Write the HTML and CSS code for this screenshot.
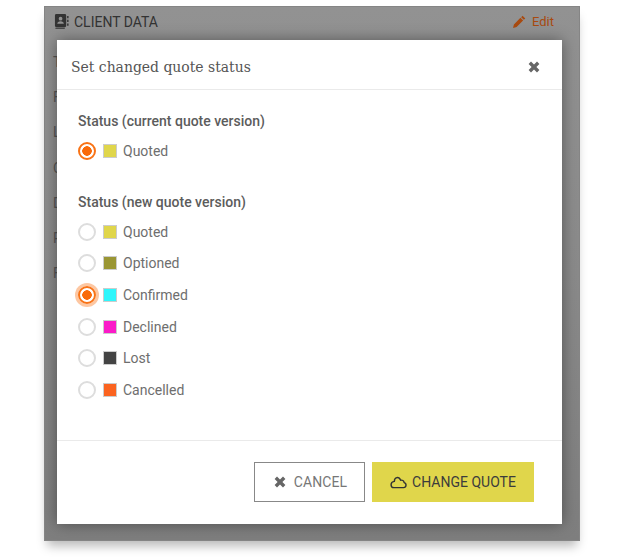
FILE: index.html
```html
<!DOCTYPE html>
<html lang="en">
<head>
<meta charset="utf-8">
<title>Set changed quote status</title>
<link rel="stylesheet" href="styles.css">
</head>
<body>
<div class="window">
  <div class="panel-head">
    <svg class="book" viewBox="0 0 16 16"><path fill="#333" d="M1 1.5A1.5 1.5 0 0 1 2.500 0h9A1.500 1.500 0 0 1 13 1.500v11a1.500 1.500 0 0 1-1.500 1.500h-9A1.500 1.500 0 0 1 1 12.500zM7 3a2 2 0 1 0 0 4 2 2 0 0 0 0-4zM3.500 10.500h7c0-1.600-1.500-2.700-3.500-2.700s-3.500 1.100-3.500 2.700z"/><path fill="#333" d="M14 2h1.500v2.500H14zM14 6h1.500v2.500H14zM14 10h1.500v2.500H14zM1.500 14.600h10v1h-10z"/></svg>
    <span class="panel-title">CLIENT DATA</span>
    <svg class="pencil" viewBox="0 0 14 14"><path fill="#a84a10" d="M10.300.8l2.900 2.900-1.500 1.500-2.900-2.900zM8 3l2.900 2.900-7 7L0 14l1-3.900z"/></svg>
    <span class="edit">Edit</span>
  </div>
  <div class="panel-rows">
    <span>T</span><span>F</span><span>L</span><span>C</span><span>D</span><span>P</span><span>F</span>
  </div>
  <div class="modal">
    <div class="modal-head">
      <h1>Set changed quote status</h1>
      <svg class="x close" viewBox="0 0 12 12"><path fill="#666" d="M3 .6L6 3.600 9 .6 11.400 3 8.400 6l3 3L9 11.400l-3-3-3 3L.6 9l3-3-3-3z"/></svg>
    </div>
    <div class="modal-body">
      <p class="group-label">Status (current quote version)</p>
      <div class="option"><span class="radio on"></span><span class="swatch quoted"></span>Quoted</div>
      <p class="group-label second">Status (new quote version)</p>
      <div class="option"><span class="radio"></span><span class="swatch quoted"></span>Quoted</div>
      <div class="option"><span class="radio"></span><span class="swatch optioned"></span>Optioned</div>
      <div class="option"><span class="radio on focus"></span><span class="swatch confirmed"></span>Confirmed</div>
      <div class="option"><span class="radio"></span><span class="swatch declined"></span>Declined</div>
      <div class="option"><span class="radio"></span><span class="swatch lost"></span>Lost</div>
      <div class="option"><span class="radio"></span><span class="swatch cancelled"></span>Cancelled</div>
    </div>
    <div class="modal-foot">
      <button class="btn cancel"><svg class="x" viewBox="0 0 12 12"><path fill="#666" d="M3 .6L6 3.600 9 .6 11.400 3 8.400 6l3 3L9 11.400l-3-3-3 3L.6 9l3-3-3-3z"/></svg>CANCEL</button>
      <button class="btn confirm"><svg class="cloud" viewBox="0 0 18 14"><path fill="none" stroke="#333" stroke-width="1.500" stroke-linejoin="round" d="M4 12.500h10.500a2.700 2.700 0 0 0 .6-5.300C14.800 5 13 4 11.300 4.600 10.500 2.600 8.800 1.500 7.200 1.700 5.600 2 4.500 3.600 4.500 5.800 2.500 6.100 1 7.500 1 9.300c0 1.800 1.300 3.200 3 3.200z"/></svg>CHANGE QUOTE</button>
    </div>
  </div>
</div>
</body>
</html>
```
FILE: styles.css
```css
* { box-sizing: border-box; }
html, body { margin: 0; height: 100%; background: #fff; overflow: hidden; }
body { padding: 6px 40px 0 44px; font-family: Roboto, "Liberation Sans", sans-serif; }
.window {
  position: relative;
  width: 536px;
  height: 535px;
  background: linear-gradient(180deg, #929292 0, #8a8a8a 50%, #7e7e7e 100%);
  border: 1px solid #858585;
  box-shadow: 0 8px 10px -3px rgba(0,0,0,.28);
}
.panel-head {
  display: flex;
  align-items: center;
  height: 29px;
  padding: 0 25px 0 9px;
}
.book { width: 15px; height: 15px; margin-right: 5px; }
.panel-title { flex: 1; font-size: 14px; color: #333; }
.pencil { width: 13px; height: 13px; margin-right: 6px; }
.edit { font-size: 13px; color: #a84a10; }
.panel-rows {
  display: flex;
  flex-direction: column;
  gap: 19.200px;
  padding: 18px 0 0 8px;
  font-size: 14px;
  line-height: 16px;
  color: #555;
}
.modal {
  position: absolute;
  left: 12px;
  top: 33px;
  width: 505px;
  height: 484px;
  display: flex;
  flex-direction: column;
  background: #fff;
  box-shadow: 0 0 14px rgba(0,0,0,.4);
}
.modal-head {
  display: flex;
  align-items: center;
  justify-content: space-between;
  height: 50px;
  padding: 4px 22px 0 14px;
  border-bottom: 1px solid #eaeaea;
}
h1 {
  margin: 0;
  font-family: "DejaVu Serif Condensed", "DejaVu Serif", serif;
  font-weight: 400;
  font-size: 15.500px;
  color: #555;
}
.x { width: 12px; height: 12px; }
.modal-body { flex: 1; padding: 22px 0 0 21px; }
.group-label {
  margin: 0;
  height: 18px;
  font-size: 14px;
  font-weight: 500;
  line-height: 18px;
  color: #5c5c5c;
}
.group-label.second { margin-top: 26px; }
.option {
  display: flex;
  align-items: center;
  height: 31.700px;
  font-size: 14px;
  color: #6e6e6e;
}
.group-label + .option { margin-top: 5px; }
.radio {
  width: 18px;
  height: 18px;
  margin-right: 7px;
  border-radius: 50%;
  border: 2px solid #ddd;
  background: #fff;
}
.radio.on {
  border-color: #f97316;
  background: radial-gradient(circle, #f96a0a 0 4.500px, #fff 5px);
}
.radio.focus { box-shadow: 0 0 0 3px rgba(249,115,22,.4); }
.swatch {
  width: 14px;
  height: 14px;
  margin-right: 6px;
  border: 1px solid #ccc;
}
.quoted { background: #e0d64b; }
.optioned { background: #9a9634; }
.confirmed { background: #2ff6fb; }
.declined { background: #fb1bc8; }
.lost { background: #444; }
.cancelled { background: #fb6420; }
.modal-foot {
  display: flex;
  justify-content: flex-end;
  gap: 7px;
  height: 84px;
  padding: 21px 28px 0 0;
  border-top: 1px solid #eaeaea;
}
.btn {
  display: flex;
  align-items: center;
  justify-content: center;
  height: 40px;
  padding: 0;
  font-family: Roboto, "Liberation Sans", sans-serif;
  font-size: 14px;
}
.cancel {
  width: 111px;
  gap: 8px;
  padding-left: 2px;
  background: #fff;
  border: 1px solid #888;
  color: #777;
  letter-spacing: .1px;
}
.confirm {
  width: 162px;
  gap: 5px;
  background: #e0d64b;
  border: 0;
  color: #3c3c3c;
}
.cloud { width: 17px; height: 13px; }
```
